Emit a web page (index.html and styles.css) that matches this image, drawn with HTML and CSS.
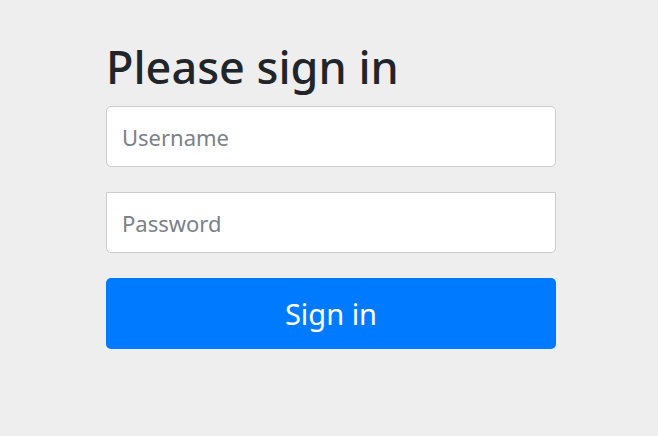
FILE: index.html
```html
<!DOCTYPE html>
<html lang="en">
<head>
  <meta charset="UTF-8">
  <meta name="viewport" content="width=device-width, initial-scale=1">
  <title>Please sign in</title>
  <link rel="stylesheet" href="styles.css">
</head>
<body>
  <div class="container">
    <form class="form-signin" method="post" action="/login">
      <h2 class="form-signin-heading">Please sign in</h2>
      <p class="field first">
        <input type="text" id="username" name="username" class="form-control" placeholder="Username" aria-label="Username">
      </p>
      <p class="field second">
        <input type="password" id="password" name="password" class="form-control" placeholder="Password" aria-label="Password">
      </p>
      <button class="btn-primary" type="submit">Sign in</button>
    </form>
  </div>
</body>
</html>
```

FILE: styles.css
```css
body {
  margin: 0;
  background-color: #eeeeee;
  font-family: "Noto Sans", "Open Sans", sans-serif;
  color: #212529;
}
.container {
  padding-top: 40px;
}
.form-signin {
  width: 450px;
  margin-left: 106px;
}
.form-signin-heading {
  font-size: 45px;
  font-weight: 500;
  line-height: 1.2;
  margin: 0 0 12px;
}
.field {
  margin: 0 0 25px;
}
.form-control {
  display: block;
  box-sizing: border-box;
  width: 100%;
  height: 61px;
  padding: 0 15px;
  font-family: inherit;
  font-size: 22px;
  color: #495057;
  background: #fff;
  border: 1px solid #cccccc;
  border-radius: 5px;
}
.second .form-control {
  border-top-left-radius: 0;
  border-top-right-radius: 0;
}
.form-control::placeholder {
  color: #7a8189;
}
.btn-primary {
  display: block;
  width: 100%;
  height: 71px;
  font-family: inherit;
  font-size: 29px;
  color: #fff;
  background-color: #007bff;
  border: none;
  border-radius: 5px;
  cursor: pointer;
}
```
